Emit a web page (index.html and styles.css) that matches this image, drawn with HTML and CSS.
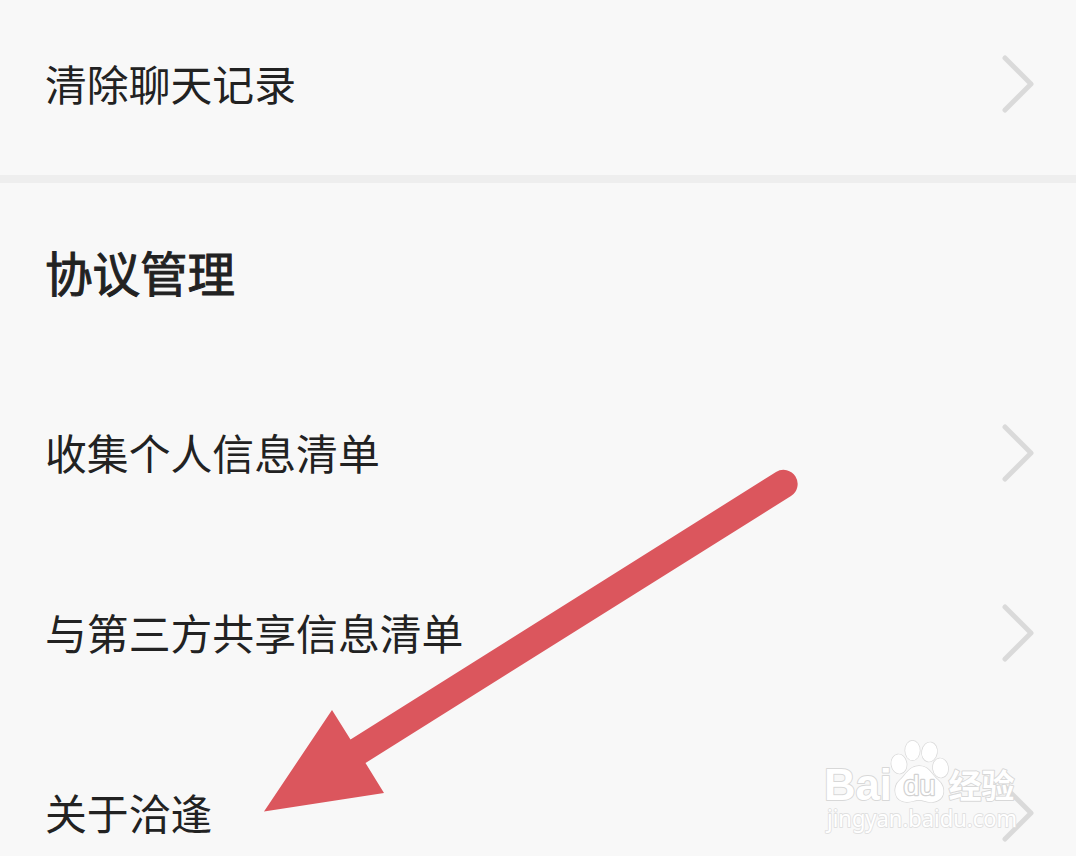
FILE: index.html
```html
<!DOCTYPE html>
<html lang="zh-CN">
<head>
<meta charset="utf-8">
<title>协议管理</title>
<link rel="stylesheet" href="styles.css">
</head>
<body>
<main class="screen">
  <div class="row row-first"><span class="label">清除聊天记录</span><svg class="chevron" viewBox="0 0 36 62"><path d="M5 5 31 31 5 57"/></svg></div>
  <div class="divider"></div>
  <h1 class="heading">协议管理</h1>
  <div class="row"><span class="label">收集个人信息清单</span><svg class="chevron" viewBox="0 0 36 62"><path d="M5 5 31 31 5 57"/></svg></div>
  <div class="row"><span class="label">与第三方共享信息清单</span><svg class="chevron" viewBox="0 0 36 62"><path d="M5 5 31 31 5 57"/></svg></div>
  <div class="row"><span class="label">关于洽逢</span><svg class="chevron" viewBox="0 0 36 62"><path d="M5 5 31 31 5 57"/></svg></div>

  <svg class="arrow" viewBox="0 0 1076 856">
    <path d="M264 811.5 332 710 350.5 739.5 776 472A14 14 0 0 1 791 496L365.500 763 384 793Z"/>
  </svg>

  <svg class="watermark" viewBox="0 0 240 126">
    <g class="mark">
      <text class="brand" x="14" y="70" textLength="68" lengthAdjust="spacingAndGlyphs">Bai</text>
      <ellipse cx="89" cy="34" rx="7.600" ry="9.700" transform="rotate(-8 89 34)"/>
      <ellipse cx="102.500" cy="20.500" rx="7.300" ry="9.800"/>
      <ellipse cx="119.500" cy="22" rx="7.500" ry="9.700" transform="rotate(10 119.500 22)"/>
      <ellipse cx="130.500" cy="38" rx="7.600" ry="9.700" transform="rotate(-8 130.500 38)"/>
      <path d="M109 36C99 36 96 45 90 50 82 57 84 72 97 72 102 72 105 70 109 70 114 70 117 73 123 72 136 70 136 57 128 50 121 44 119 36 109 36Z"/>
      <text class="du" x="93.500" y="65" textLength="32" lengthAdjust="spacingAndGlyphs">du</text>
      <text class="cn" x="138.500" y="67.500" textLength="66" lengthAdjust="spacingAndGlyphs">经验</text>
      <text class="url" x="17" y="96.500" textLength="190" lengthAdjust="spacingAndGlyphs">jingyan.baidu.com</text>
    </g>
  </svg>
</main>
</body>
</html>
```
FILE: styles.css
```css
* { box-sizing: border-box; }
body { margin: 0; background: #f8f8f8; }
.screen {
  position: relative;
  width: 1076px;
  height: 856px;
  overflow: hidden;
  background: #f8f8f8;
  color: #222;
  font-family: "Noto Sans CJK SC", sans-serif;
}
.row {
  display: flex;
  align-items: center;
  justify-content: space-between;
  height: 180px;
  padding: 0 40px 0 45px;
}
.row-first { height: 175px; padding-bottom: 7px; }
.label { font-size: 41.850px; line-height: 60px; padding-bottom: 2px; }
.chevron {
  width: 36px;
  height: 62px;
  fill: none;
  stroke: #dadada;
  stroke-width: 5;
  stroke-linecap: round;
  stroke-linejoin: round;
}
.divider { height: 8px; background: #eee; }
.heading {
  display: flex;
  align-items: center;
  height: 180px;
  margin: 0;
  padding: 0 0 3px 45px;
  font-size: 47.500px;
  font-weight: 400;
  -webkit-text-stroke: 1px #222;
}
.arrow { position: absolute; left: 0; top: 0; width: 1076px; height: 856px; fill: #db565d; }
.watermark { position: absolute; left: 810px; top: 730px; width: 240px; height: 126px; }
.mark {
  fill: #fff;
  stroke: #d8d8d8;
  stroke-width: 1.400;
  paint-order: stroke;
  stroke-linejoin: round;
}
.brand { font: bold 45px "Liberation Sans", sans-serif; stroke-width: 2; }
.du { font: 28px "Liberation Sans", sans-serif; stroke: #d2d2d2; stroke-width: 2.500; }
.cn { font: bold 33px "Noto Sans CJK SC", sans-serif; stroke-width: 2; }
.url { font: 23px "Noto Sans", sans-serif; stroke: #e0e0e0; stroke-width: 1.800; }
```
